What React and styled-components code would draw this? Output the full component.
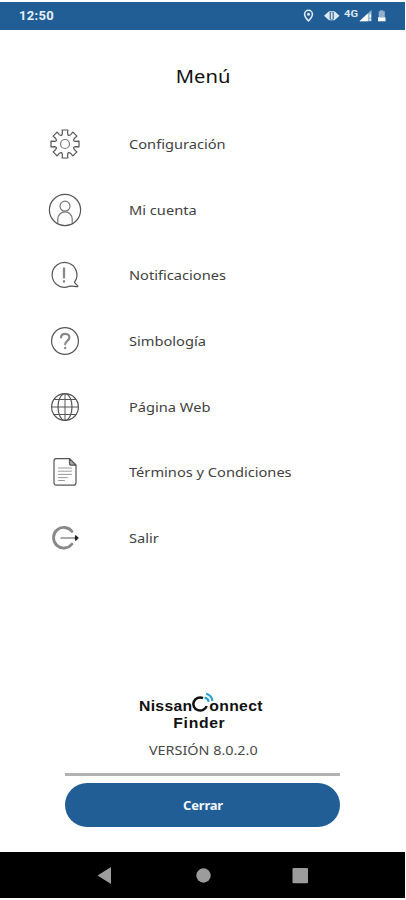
import React from "react";
import styled, { createGlobalStyle } from "styled-components";

const GlobalStyle = createGlobalStyle`
  * { box-sizing: border-box; }
  body { margin: 0; background: #fff; }
`;

const Screen = styled.div`
  width: 406px;
  height: 900px;
  padding: 2px 1px 2px 0;
  display: flex;
  flex-direction: column;
  background: #fff;
  font-family: "Noto Sans", sans-serif;
`;

const StatusBar = styled.header`
  height: 28px;
  flex: none;
  display: flex;
  align-items: center;
  justify-content: space-between;
  padding: 0 16px 0 19px;
  background: #215e96;
  color: #e6eff8;
`;

const Clock = styled.span`
  font: 700 13px/28px Roboto, sans-serif;
  letter-spacing: 0.3px;
`;

const StatusIcons = styled.svg`
  display: block;
  width: 86px;
  height: 28px;
  font: 700 9px Roboto, sans-serif;
`;

const Title = styled.h1`
  margin: 31px 0 0;
  height: 30px;
  align-self: center;
  font-size: 18.5px;
  line-height: 30px;
  font-weight: 400;
  color: #111;
  padding-left: 1px;
  transform: scaleX(1.09);
`;

const Menu = styled.nav`
  margin-top: 20.2px;
  display: grid;
  grid-auto-rows: 65.67px;
`;

const MenuItem = styled.a`
  display: grid;
  grid-template-columns: 36px 1fr;
  column-gap: 45.5px;
  align-items: center;
  padding-left: 47px;
  color: #424242;
`;

const MenuIcon = styled.svg`
  width: 36px;
  height: 36px;
  fill: none;
  stroke: #555;
  stroke-width: 1.2;
  stroke-linecap: round;
  stroke-linejoin: round;
`;

const Label = styled.span`
  justify-self: start;
  font-size: 13px;
  line-height: 20px;
  white-space: nowrap;
  transform: scaleX(1.125);
  transform-origin: left center;
`;

const Footer = styled.footer`
  margin-top: auto;
  display: flex;
  flex-direction: column;
  align-items: center;
  padding-bottom: 25px;
`;

const Brand = styled.div`
  width: 126px;
  display: flex;
  flex-direction: column;
  align-items: center;
  font-family: "Liberation Sans", sans-serif;
  font-weight: 700;
  font-size: 15px;
  line-height: 17px;
  color: #111;
  padding-right: 4px;
  transform: scaleX(1.05);
`;

const BrandLine = styled.div`
  display: flex;
  align-items: flex-end;
  letter-spacing: ${(p) => p.$spacing}px;
`;

const BrandMark = styled.svg`
  width: 16px;
  height: 24px;
  overflow: visible;
`;

const BrandName = styled(BrandLine)`
  padding-right: 3px;
`;

const Version = styled.div`
  margin-top: 10px;
  padding-left: 1px;
  font-size: 12.5px;
  line-height: 20px;
  color: #484848;
  transform: scaleX(1.15);
`;

const Divider = styled.hr`
  width: 275px;
  height: 3px;
  margin: 12px 0 7px;
  border: 0;
  background: #b2b2b2;
`;

const CloseButton = styled.button`
  width: 275px;
  height: 44px;
  border: 0;
  border-radius: 22px;
  padding: 0 0 0 1px;
  background: #215e96;
  color: #f2f7fc;
  font: 700 13px "Noto Sans", sans-serif;
  letter-spacing: -0.2px;
`;

const SystemNav = styled.div`
  height: 46px;
  flex: none;
  display: grid;
  grid-template-columns: repeat(3, 98px);
  justify-content: center;
  align-items: center;
  justify-items: center;
  background: #000;
`;

const NavGlyph = styled.svg`
  width: 18px;
  height: 18px;
  fill: #9c9c9c;
`;

const polar = (angle, radius) =>
  `${(18 + radius * Math.cos(angle)).toFixed(2)} ${(18 + radius * Math.sin(angle)).toFixed(2)}`;

// Eight square teeth joined by rounded valleys.
const gearPath = (() => {
  let d = "";
  for (let i = 0; i < 8; i += 1) {
    const a = (i * Math.PI) / 4 - Math.PI / 2;
    d += `${i ? "L" : "M"}${polar(a - 0.24, 11)}L${polar(a - 0.2, 14.3)}L${polar(a + 0.2, 14.3)}L${polar(a + 0.24, 11)}`;
    d += `Q${polar(a + Math.PI / 8, 7.9)} ${polar(a + Math.PI / 4 - 0.24, 11)}`;
  }
  return `${d}Z`;
})();

const items = [
  {
    label: "Configuración",
    icon: <><path d={gearPath} /><circle cx="18" cy="18" r="4.5" stroke="#777" /></>,
  },
  {
    label: "Mi cuenta",
    icon: <><circle cx="18" cy="18" r="15.6" /><circle cx="18" cy="14.2" r="5" stroke="#777" /><path stroke="#777" d="M10.8 30.5v-3.4a7.2 7.2 0 0 1 14.4 0v3.4" /></>,
  },
  {
    label: "Notificaciones",
    icon: <><path d="M27.5 25.2A12.4 12.4 0 1 0 22 29.4C25 28.6 27.5 29.6 30.8 29.6C31 28.4 28.6 27.4 27.5 25.2" /><path d="M17 11.5v9M17 24.2v.5" strokeWidth="2.3" stroke="#888" /></>,
  },
  {
    label: "Simbología",
    icon: <><circle cx="18" cy="18" r="13.4" /><path d="M14 14.5c0-5 8.4-4.8 8.4-.2 0 3.6-4.2 3.4-4.2 7M18.2 24.8v.4" strokeWidth="2.2" stroke="#888" /></>,
  },
  {
    label: "Página Web",
    icon: <><circle cx="18" cy="18" r="13.4" /><ellipse cx="18" cy="18" rx="7" ry="13.4" /><path d="M18 4.6v26.8M4.6 18h26.8M7.2 10.5h21.6M7.2 25.5h21.6" strokeWidth="1" /></>,
  },
  {
    label: "Términos y Condiciones",
    icon: <><path d="M9 4.7h13.5l6.5 6.5v17.5a2.5 2.5 0 0 1-2.5 2.5H9.2A2.2 2.2 0 0 1 7 29V6.9A2.2 2.2 0 0 1 9 4.7Z" /><path d="M22.5 4.7v4.5a2 2 0 0 0 2 2H29Z" fill="#aaa" /><path d="M11.5 14h13M11.5 17.2h13M11.5 20.4h13M11.5 23.6h9M11.5 26.5h6" strokeWidth="1" stroke="#999" /></>,
  },
  {
    label: "Salir",
    icon: <><path d="M25 11.5A10.3 10.3 0 1 0 25 24" stroke="#888" strokeWidth="2.8" /><path d="M14 18h15" /><path d="M28.5 15.8l2.5 2.2-2.5 2.2Z" fill="#222" stroke="#222" /></>,
  },
];

export default function App() {
  return (
    <Screen>
      <GlobalStyle />
      <StatusBar>
        <Clock>12:50</Clock>
        <StatusIcons viewBox="0 0 86 28" fill="#dce9f5">
          <path fillRule="evenodd" d="M5.5 7.5a4.7 4.7 0 0 1 4.7 4.7c0 3.5-4.7 7.8-4.7 7.8s-4.7-4.3-4.7-7.8A4.7 4.7 0 0 1 5.5 7.5Zm0 1.6a3.1 3.1 0 0 0-3.1 3.1c0 1.8 1.8 4.1 3.1 5.5 1.3-1.4 3.1-3.7 3.1-5.5A3.1 3.1 0 0 0 5.5 9.1Z" />
          <circle cx="5.5" cy="12.2" r="1.5" />
          <path fillRule="evenodd" d="M21 13.7l5-4.5h5.5l5 4.5-5 4.6H26ZM26.7 10v7.4h4V10Z" />
          <rect x="27.8" y="10.2" width="1.8" height="7" />
          <text x="41" y="14.5" textLength="14" lengthAdjust="spacingAndGlyphs">4G</text>
          <path d="M68.5 8v11.3H56.5Z" opacity=".65" />
          <path d="M64.8 11.5v7.8h-8.3ZM66.5 12.5H68v3h-1.5ZM66.5 17H68v1.500h-1.500Z" fill="#fff" />
          <path d="M75.700 9.300h1.500V8.200h3v1.100h1.600v6h-6.100Z" opacity=".6" />
          <path d="M75 15.300h7.500v4H75Z" fill="#fff" />
        </StatusIcons>
      </StatusBar>
      <Title>Menú</Title>
      <Menu>
        {items.map(({ label, icon }) => (
          <MenuItem key={label}>
            <MenuIcon viewBox="0 0 36 36">{icon}</MenuIcon>
            <Label>{label}</Label>
          </MenuItem>
        ))}
      </Menu>
      <Footer>
        <Brand>
          <BrandLine $spacing={0.3}>
            <span>Nissan</span>
            <BrandMark viewBox="0 0 16 24" fill="none">
              <path d="M10 8.1A6.500 6.500 0 1 0 13.500 16" stroke="#111" strokeWidth="2.400" />
              <path d="M11.500 7.500c2.300.6 3.700 2.200 3.900 4.300M13 3.700c3.300 1 5.700 3.700 6 7.300" stroke="#299fd2" strokeWidth="2" />
            </BrandMark>
            <span>onnect</span>
          </BrandLine>
          <BrandName $spacing={0.6}>Finder</BrandName>
        </Brand>
        <Version>VERSIÓN 8.0.2.0</Version>
        <Divider />
        <CloseButton>Cerrar</CloseButton>
      </Footer>
      <SystemNav>
        <NavGlyph viewBox="0 0 18 18"><path d="M1.500 9.500L15 1v17Z" /></NavGlyph>
        <NavGlyph viewBox="0 0 18 18"><circle cx="9.500" cy="9.500" r="7.200" /></NavGlyph>
        <NavGlyph viewBox="0 0 18 18"><rect x="0.500" y="2" width="15.500" height="15.300" rx="1" /></NavGlyph>
      </SystemNav>
    </Screen>
  );
}
